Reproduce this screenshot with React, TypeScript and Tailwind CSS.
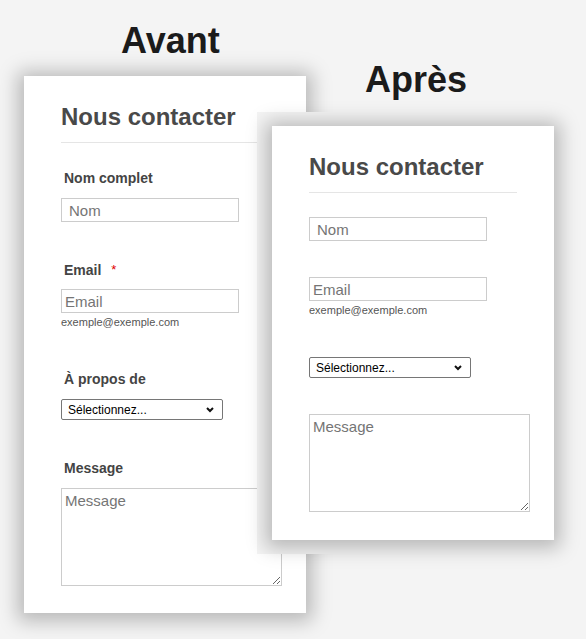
import { ReactNode } from "react";

const Label = ({ children }: { children: ReactNode }) => (
  <div className="ml-[3px] text-[14px] leading-none font-bold text-[#444]">{children}</div>
);

const Select = ({ className = "" }: { className?: string }) => (
  <div className={`relative w-[162px] h-[21px] ${className}`}>
    <select className="block w-[162px] h-[21px] appearance-none border border-[#767676] rounded-[2px] bg-white pl-[6px] text-[12px] leading-none text-black">
      <option>Sélectionnez...</option>
    </select>
    <svg
      className="pointer-events-none absolute right-[9px] top-[8px]"
      width="8"
      height="6"
      viewBox="0 0 8 6"
    >
      <path d="M1 1 L4 4 L7 1" fill="none" stroke="#111" strokeWidth="2" />
    </svg>
  </div>
);

const inputCls =
  "block w-[178px] h-[24px] border border-[#cccccc] bg-white text-[15px] leading-none placeholder:text-[#757575] outline-none";

const Heading = () => (
  <div className="w-[208px] border-b border-[#e5e5e5] pb-[13px]">
    <h2 className="text-[24px] leading-none font-bold text-[#494949]">Nous contacter</h2>
  </div>
);

const Helper = () => (
  <div className="mt-[4px] text-[11px] leading-none text-[#555]">exemple@exemple.com</div>
);

const Textarea = ({ className = "" }: { className?: string }) => (
  <textarea
    placeholder="Message"
    className={`block w-[221px] h-[98px] border border-[#cccccc] bg-white px-[3px] pt-[3px] text-[15px] leading-[18px] placeholder:text-[#757575] outline-none resize ${className}`}
  />
);

const shadow = "shadow-[0_2px_18px_6px_rgba(0,0,0,0.25)]";

export default function App() {
  return (
    <div className="relative w-[586px] h-[639px] overflow-hidden bg-[#f4f4f4] font-['Liberation_Sans',Arial,sans-serif]">
      {/* Avant */}
      <div className="pl-[24px] pt-[23px]">
        <h1 className="ml-[97px] text-[36px] leading-none font-bold text-[#1b1b1b]">Avant</h1>
        <div className={`mt-[17px] w-[282px] h-[537px] bg-white pl-[37px] pt-[29px] ${shadow}`}>
          <Heading />
          <div className="mt-[28px]">
            <Label>Nom complet</Label>
          </div>
          <input placeholder="Nom" className={`${inputCls} mt-[13px] pl-[7px]`} />

          <div className="mt-[41px] flex items-start">
            <Label>Email</Label>
            <span className="ml-[10px] text-[13px] leading-none text-[#e00000]">*</span>
          </div>
          <input placeholder="Email" className={`${inputCls} mt-[12px] pl-[3px]`} />
          <Helper />

          <div className="mt-[44px]">
            <Label>À propos de</Label>
          </div>
          <Select className="mt-[13px]" />

          <div className="mt-[41px]">
            <Label>Message</Label>
          </div>
          <Textarea className="mt-[13px]" />
        </div>
      </div>

      {/* Après, pasted over the first card */}
      <div className="absolute left-[257px] top-[62px] flex flex-col">
        <h1 className="ml-[108px] text-[36px] leading-none font-bold text-[#1b1b1b]">Après</h1>
        <div className="mt-[14px] bg-[#f4f4f4] pl-[15px] pr-[14px] py-[14px]">
          <div className={`w-[282px] h-[414px] bg-white pl-[37px] pt-[29px] ${shadow}`}>
            <Heading />
            <input placeholder="Nom" className={`${inputCls} mt-[24px] pl-[7px]`} />
            <input placeholder="Email" className={`${inputCls} mt-[36px] pl-[3px]`} />
            <Helper />
            <Select className="mt-[41px]" />
            <Textarea className="mt-[36px]" />
          </div>
        </div>
      </div>
    </div>
  );
}
